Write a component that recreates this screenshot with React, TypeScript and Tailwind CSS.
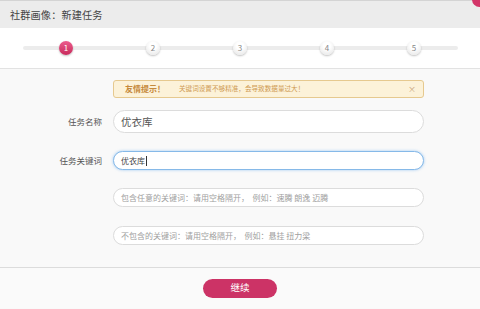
import React from "react";

const FONT = { fontFamily: '"Noto Sans CJK SC", "Noto Sans", sans-serif' };

const STEPS = [1, 2, 3, 4, 5];

function Step({ n, active }: { n: number; active?: boolean }) {
  return active ? (
    <div className="w-[14px] h-[14px] rounded-full bg-gradient-to-b from-[#ec5b8d] to-[#c8295c] shadow-[0_1px_2px_rgba(0,0,0,0.25)] flex items-center justify-center text-[8px] leading-none text-white">
      {n}
    </div>
  ) : (
    <div className="w-[14px] h-[14px] rounded-full bg-[radial-gradient(circle_at_50%_35%,#ffffff_30%,#e2e2e2_100%)] shadow-[0_1px_2px_rgba(0,0,0,0.25)] flex items-center justify-center text-[8px] leading-none text-[#888]">
      {n}
    </div>
  );
}

function Row({ label, children, className }: { label?: string; children: React.ReactNode; className?: string }) {
  return (
    <div className={`flex items-center ${className ?? ""}`}>
      <div className="w-[102px] text-right text-[8.5px] text-[#555]">{label}</div>
      <div className="ml-[11px] w-[311px]">{children}</div>
    </div>
  );
}

export default function App() {
  return (
    <div className="relative w-[480px] h-[309px] overflow-hidden bg-[#f9f9f9]" style={FONT}>
      {/* header */}
      <div className="h-[28px] bg-[#ececec] border-t border-[#d4d4d4] flex items-center pl-[10px]">
        <span className="text-[10.2px] text-[#444] tracking-[0.1px]">社群画像：新建任务</span>
      </div>
      <div className="absolute -top-[8px] -right-[7px] w-[15px] h-[15px] rounded-full bg-[#d33669]" />

      {/* steps */}
      <div className="h-[41px] bg-white border-b border-[#e2e2e2] flex items-center">
        <div className="relative ml-[23px] w-[435px] h-[14px] flex items-center">
          <div className="absolute left-0 right-0 top-[5px] h-[4px] rounded-full bg-[#ececec]" />
          <div className="relative flex items-center gap-[73px] pl-[36px]">
            {STEPS.map((n) => (
              <Step key={n} n={n} active={n === 1} />
            ))}
          </div>
        </div>
      </div>

      {/* body */}
      <div className="h-[199px] pt-[11px] border-b border-[#dcdcdc]">
        <Row>
          <div className="h-[18px] rounded-[3px] border border-[#e6c98f] bg-[#fcf2d9] flex items-center pl-[11px] pr-[7px]">
            <span className="text-[8px] font-bold text-[#c68a3c]">友情提示！</span>
            <span className="ml-[14px] text-[6.6px] text-[#cf9a52]">关键词设置不够精准，会导致数据量过大！</span>
            <span className="ml-auto text-[8px] leading-none text-[#c9a57a]">×</span>
          </div>
        </Row>

        <Row label="任务名称" className="mt-[12px]">
          <div className="h-[23px] rounded-full border border-[#dcdcdc] bg-white flex items-center pl-[7px] text-[10.5px] text-[#555]">
            优衣库
          </div>
        </Row>

        <Row label="任务关键词" className="mt-[18px]">
          <div className="h-[19px] rounded-full border border-[#86b9e8] bg-white shadow-[0_0_3px_rgba(82,160,236,0.55)] flex items-center pl-[7px] text-[8px] text-[#444]">
            优衣库
            <span className="ml-[1px] w-px h-[10px] bg-[#333]" />
          </div>
        </Row>

        <Row className="mt-[18px]">
          <div className="h-[19px] rounded-full border border-[#dcdcdc] bg-white flex items-center pl-[7px] text-[8px] text-[#a0a0a0] whitespace-pre">
            包含任意的关键词：请用空格隔开，  例如：速腾 朗逸 迈腾
          </div>
        </Row>

        <Row className="mt-[19px]">
          <div className="h-[19px] rounded-full border border-[#dcdcdc] bg-white flex items-center pl-[7px] text-[8px] text-[#a0a0a0] whitespace-pre">
            不包含的关键词：请用空格隔开，  例如：悬挂 扭力梁
          </div>
        </Row>
      </div>

      {/* footer */}
      <div className="h-[40px] bg-[#fafafa] flex items-center justify-center">
        <button className="w-[74px] h-[19px] rounded-full bg-[#cc3366] text-white text-[9.5px] leading-none flex items-center justify-center">
          继续
        </button>
      </div>
    </div>
  );
}
